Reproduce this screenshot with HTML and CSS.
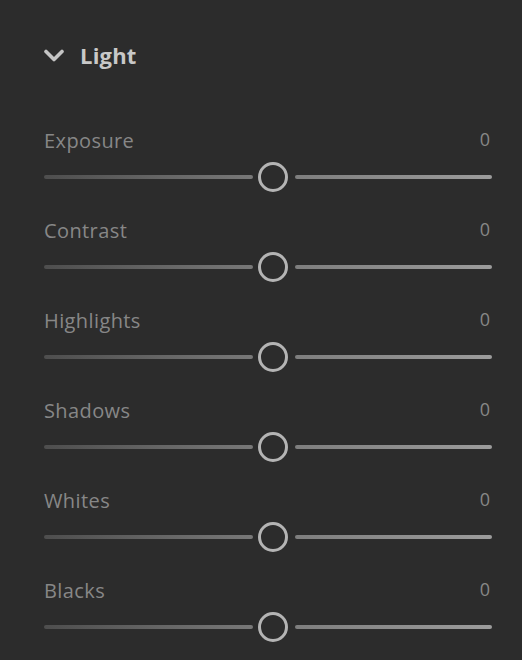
FILE: index.html
```html
<!DOCTYPE html>
<html>
<head>
<meta charset="utf-8">
<link rel="stylesheet" href="styles.css">
</head>
<body>
<div class="panel">
  <div class="header">
    <svg class="chevron" width="20" height="14" viewBox="0 0 20 14"><path d="M2 2.5 L10 10.5 L18 2.5" fill="none" stroke="#c4c4c4" stroke-width="3.6" stroke-linecap="round" stroke-linejoin="round"/></svg>
    <span class="title">Light</span>
  </div>
  <div class="row">
    <div class="label-line"><span class="label">Exposure</span><span class="value">0</span></div>
    <div class="slider"><div class="track left"></div><div class="thumb"></div><div class="track right"></div></div>
  </div>
  <div class="row">
    <div class="label-line"><span class="label">Contrast</span><span class="value">0</span></div>
    <div class="slider"><div class="track left"></div><div class="thumb"></div><div class="track right"></div></div>
  </div>
  <div class="row">
    <div class="label-line"><span class="label">Highlights</span><span class="value">0</span></div>
    <div class="slider"><div class="track left"></div><div class="thumb"></div><div class="track right"></div></div>
  </div>
  <div class="row">
    <div class="label-line"><span class="label">Shadows</span><span class="value">0</span></div>
    <div class="slider"><div class="track left"></div><div class="thumb"></div><div class="track right"></div></div>
  </div>
  <div class="row">
    <div class="label-line"><span class="label">Whites</span><span class="value">0</span></div>
    <div class="slider"><div class="track left"></div><div class="thumb"></div><div class="track right"></div></div>
  </div>
  <div class="row">
    <div class="label-line"><span class="label">Blacks</span><span class="value">0</span></div>
    <div class="slider"><div class="track left"></div><div class="thumb"></div><div class="track right"></div></div>
  </div>
</div>
</body>
</html>
```
FILE: styles.css
```css
html, body {
  margin: 0;
  padding: 0;
  background: #2c2c2c;
}
body {
  width: 522px;
  height: 660px;
  overflow: hidden;
  font-family: "Open Sans", Lato, sans-serif;
}
.panel {
  padding: 40px 30px 0 44px;
}
.header {
  display: flex;
  align-items: center;
  height: 30px;
  gap: 16px;
}
.chevron {
  display: block;
  margin-top: 2px;
}
.title {
  color: #c8c8c8;
  font-size: 22px;
  font-weight: 700;
  letter-spacing: 0.2px;
}
.row {
  margin-top: 55px;
}
.row + .row {
  margin-top: 23px;
}
.label-line {
  display: flex;
  justify-content: space-between;
  align-items: center;
  height: 30px;
}
.label {
  color: #878787;
  font-size: 20px;
  letter-spacing: 0.4px;
}
.value {
  color: #878787;
  font-size: 18px;
  margin-top: -3px;
  margin-right: 2px;
}
.slider {
  display: flex;
  align-items: center;
  height: 30px;
  margin-top: 7px;
}
.track {
  height: 4px;
  border-radius: 2px;
}
.track.left {
  width: 209px;
  background: linear-gradient(to right, #4e4e4e, #787878);
}
.track.right {
  flex: 1;
  background: linear-gradient(to right, #7e7e7e, #9c9c9c);
}
.thumb {
  box-sizing: border-box;
  width: 30px;
  height: 30px;
  border: 3.5px solid #b4b4b4;
  border-radius: 50%;
  margin: 0 7px 0 5px;
}
```
